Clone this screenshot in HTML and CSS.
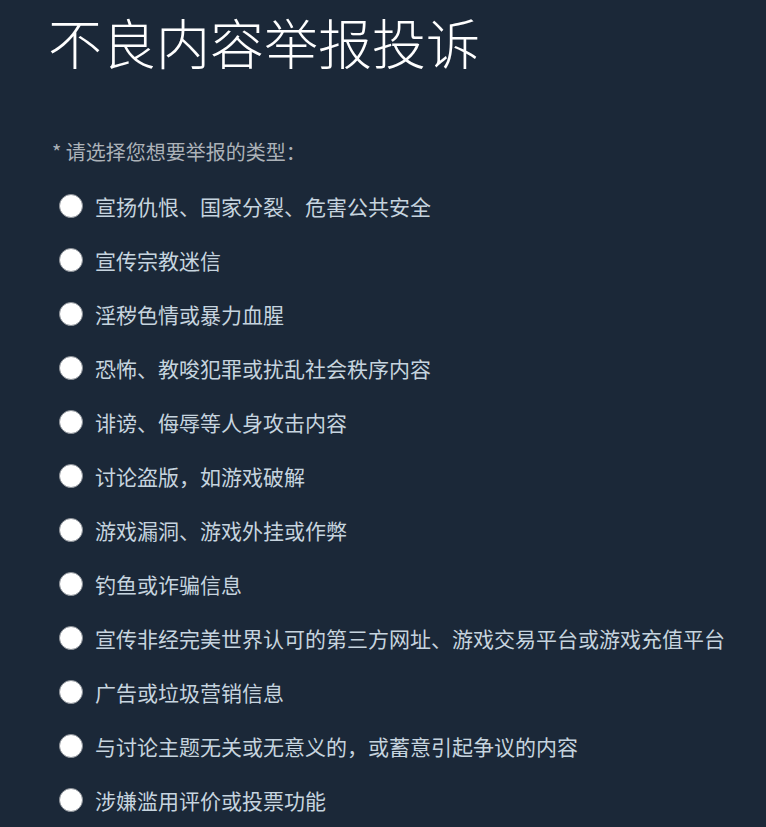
FILE: index.html
```html
<!DOCTYPE html>
<html lang="zh-CN">
<head>
<meta charset="utf-8">
<link rel="stylesheet" href="styles.css">
</head>
<body>
<div class="page">
  <h1 class="title">不良内容举报投诉</h1>
  <div class="label">* 请选择您想要举报的类型：</div>
  <ul class="options">
    <li class="option"><span class="radio"></span><span class="text">宣扬仇恨、国家分裂、危害公共安全</span></li>
    <li class="option"><span class="radio"></span><span class="text">宣传宗教迷信</span></li>
    <li class="option"><span class="radio"></span><span class="text">淫秽色情或暴力血腥</span></li>
    <li class="option"><span class="radio"></span><span class="text">恐怖、教唆犯罪或扰乱社会秩序内容</span></li>
    <li class="option"><span class="radio"></span><span class="text">诽谤、侮辱等人身攻击内容</span></li>
    <li class="option"><span class="radio"></span><span class="text">讨论盗版，如游戏破解</span></li>
    <li class="option"><span class="radio"></span><span class="text">游戏漏洞、游戏外挂或作弊</span></li>
    <li class="option"><span class="radio"></span><span class="text">钓鱼或诈骗信息</span></li>
    <li class="option"><span class="radio"></span><span class="text">宣传非经完美世界认可的第三方网址、游戏交易平台或游戏充值平台</span></li>
    <li class="option"><span class="radio"></span><span class="text">广告或垃圾营销信息</span></li>
    <li class="option"><span class="radio"></span><span class="text">与讨论主题无关或无意义的，或蓄意引起争议的内容</span></li>
    <li class="option"><span class="radio"></span><span class="text">涉嫌滥用评价或投票功能</span></li>
  </ul>
</div>
</body>
</html>
```

FILE: styles.css
```css
html, body {
  margin: 0;
  padding: 0;
  background: #1b2838;
}
body {
  font-family: "Noto Sans CJK SC", "Noto Sans", sans-serif;
  overflow: hidden;
}
.page {
  padding: 0 0 0 48px;
}
.title {
  margin: 0;
  padding-top: 10px;
  font-size: 54px;
  line-height: 64px;
  font-weight: 300;
  color: #ffffff;
  letter-spacing: 0;
}
.label {
  margin-top: 65px;
  font-size: 20px;
  line-height: 26px;
  color: #acb2b8;
  padding-left: 4px;
}
.options {
  list-style: none;
  margin: 14px 0 0 0;
  padding: 0 0 0 11px;
}
.option {
  display: flex;
  align-items: center;
  height: 54px;
}
.radio {
  width: 22px;
  height: 22px;
  border-radius: 50%;
  background: #ffffff;
  border: 1px solid #8a8f96;
  flex: none;
}
.text {
  margin-left: 12px;
  font-size: 21px;
  color: #c6d4df;
  white-space: nowrap;
}
```
